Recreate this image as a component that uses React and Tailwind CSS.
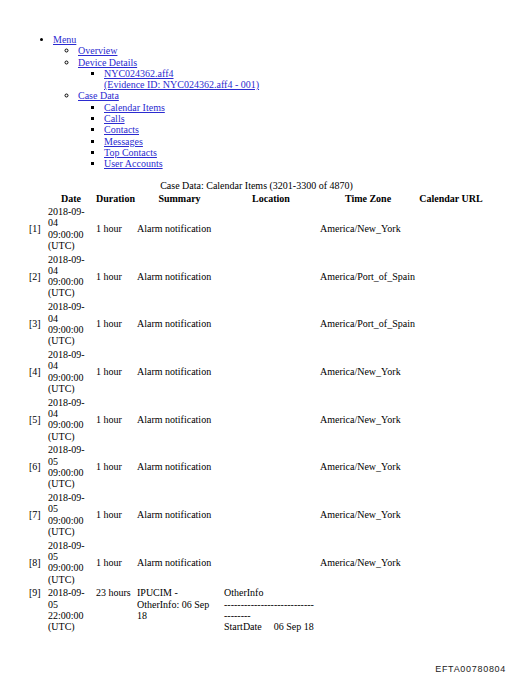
import React from 'react'

// Страница отчёта: меню + таблица календаря (масштаб ~10px Times)
const rows = [
  { n: 1, day: '04', tz: 'America/New_York' },
  { n: 2, day: '04', tz: 'America/Port_of_Spain' },
  { n: 3, day: '04', tz: 'America/Port_of_Spain' },
  { n: 4, day: '04', tz: 'America/New_York' },
  { n: 5, day: '04', tz: 'America/New_York' },
  { n: 6, day: '05', tz: 'America/New_York' },
  { n: 7, day: '05', tz: 'America/New_York' },
  { n: 8, day: '05', tz: 'America/New_York' },
]

const link = 'text-[#2b2bd0] underline'
const cell = 'px-[1px] py-[1.25px] text-left align-middle font-normal'
const head = 'px-[1px] pt-[1.5px] pb-0 text-center font-bold'

function Menu() {
  return (
    <ul className="list-disc pl-[25px] my-[10px]">
      <li>
        <a className={link}>Menu</a>
        <ul className="list-[circle] pl-[25px]">
          <li><a className={link}>Overview</a></li>
          <li>
            <a className={link}>Device Details</a>
            <ul className="list-[square] pl-[26px]">
              <li>
                <a className={link}>NYC024362.aff4<br />(Evidence ID: NYC024362.aff4 - 001)</a>
              </li>
            </ul>
          </li>
          <li>
            <a className={link}>Case Data</a>
            <ul className="list-[square] pl-[26px]">
              <li><a className={link}>Calendar Items</a></li>
              <li><a className={link}>Calls</a></li>
              <li><a className={link}>Contacts</a></li>
              <li><a className={link}>Messages</a></li>
              <li><a className={link}>Top Contacts</a></li>
              <li><a className={link}>User Accounts</a></li>
            </ul>
          </li>
        </ul>
      </li>
    </ul>
  )
}

export default function App() {
  return (
    <div
      className="relative flex flex-col h-[678px] bg-white text-black text-[10px] leading-[11.3px] pl-[28px] pt-[24px]"
      style={{ fontFamily: '"Liberation Serif", "Times New Roman", serif' }}
    >
      <Menu />

      <table className="table-fixed w-[457px] border-separate border-spacing-0">
        <caption className="text-center pb-[1px]">Case Data: Calendar Items (3201-3300 of 4870)</caption>
        <colgroup>
          <col className="w-[19px]" />
          <col className="w-[48px]" />
          <col className="w-[41px]" />
          <col className="w-[87px]" />
          <col className="w-[96px]" />
          <col className="w-[98px]" />
          <col className="w-[68px]" />
        </colgroup>
        <thead>
          <tr>
            <th className={head}></th>
            <th className={head}>Date</th>
            <th className={head}>Duration</th>
            <th className={head}>Summary</th>
            <th className={head}>Location</th>
            <th className={head}>Time Zone</th>
            <th className={head + ' whitespace-nowrap'}>Calendar URL</th>
          </tr>
        </thead>
        <tbody>
          {rows.map(r => (
            <tr key={r.n}>
              <td className={cell}>[{r.n}]</td>
              <td className={cell}>2018-09-<br />{r.day}<br />09:00:00<br />(UTC)</td>
              <td className={cell}>1 hour</td>
              <td className={cell + ' whitespace-nowrap'}>Alarm notification</td>
              <td className={cell}></td>
              <td className={cell + ' whitespace-nowrap'}>{r.tz}</td>
              <td className={cell}></td>
            </tr>
          ))}
          <tr>
            <td className={cell + ' !align-top'}>[9]</td>
            <td className={cell + ' !align-top'}>2018-09-<br />05<br />22:00:00<br />(UTC)</td>
            <td className={cell + ' !align-top whitespace-nowrap'}>23 hours</td>
            <td className={cell + ' !align-top'}>IPUCIM -<br />OtherInfo: 06 Sep<br />18</td>
            <td className={cell + ' !align-top whitespace-nowrap'}>
              OtherInfo<br />
              ---------------------------<br />
              --------<br />
              StartDate<span className="inline-block w-[12px]"></span>06 Sep 18
            </td>
            <td className={cell}></td>
            <td className={cell}></td>
          </tr>
        </tbody>
      </table>

      <div
        className="mt-auto mb-[3px] self-end pr-[6px] text-[9px] leading-[11px] tracking-[0.7px] text-[#222]"
        style={{ fontFamily: '"Liberation Sans", Arial, sans-serif' }}
      >
        EFTA00780804
      </div>
    </div>
  )
}
